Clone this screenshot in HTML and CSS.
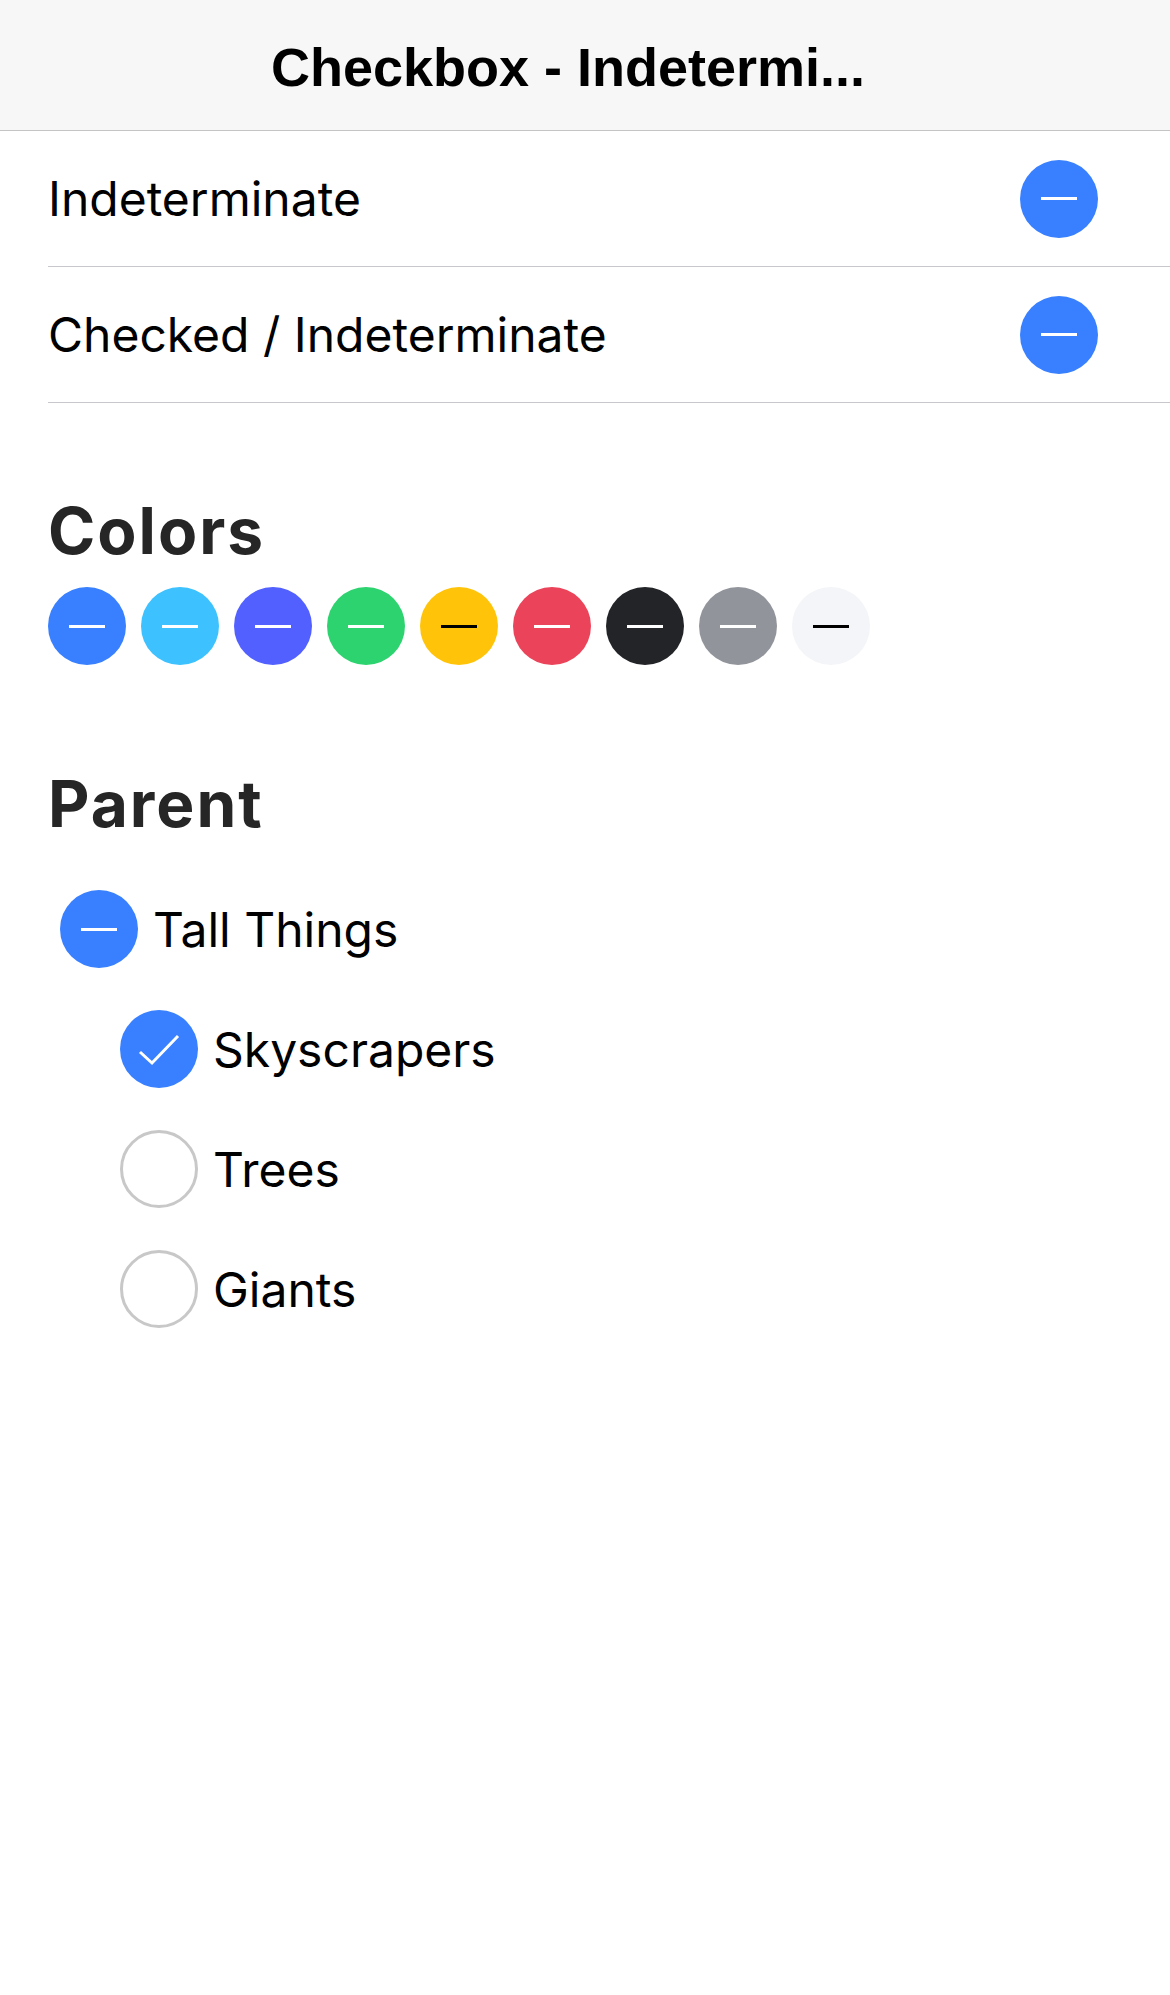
FILE: index.html
```html
<!DOCTYPE html>
<html lang="en">
<head>
<meta charset="utf-8">
<title>Checkbox - Indeterminate</title>
<link rel="stylesheet" href="styles.css">
</head>
<body>
<header class="toolbar">
  <div class="title">Checkbox - Indetermi...</div>
</header>
<main class="content">
  <div class="list">
    <div class="item">
      <div class="item-inner">
        <span class="label">Indeterminate</span>
        <span class="cb cb-primary"><span class="dash"></span></span>
      </div>
    </div>
    <div class="item">
      <div class="item-inner">
        <span class="label">Checked / Indeterminate</span>
        <span class="cb cb-primary"><span class="dash"></span></span>
      </div>
    </div>
  </div>

  <section class="section">
    <h2 class="heading heading-colors">Colors</h2>
    <div class="swatches">
      <span class="cb cb-primary"><span class="dash"></span></span>
      <span class="cb cb-secondary"><span class="dash"></span></span>
      <span class="cb cb-tertiary"><span class="dash"></span></span>
      <span class="cb cb-success"><span class="dash"></span></span>
      <span class="cb cb-warning"><span class="dash dash-dark"></span></span>
      <span class="cb cb-danger"><span class="dash"></span></span>
      <span class="cb cb-dark"><span class="dash"></span></span>
      <span class="cb cb-medium"><span class="dash"></span></span>
      <span class="cb cb-light"><span class="dash dash-dark"></span></span>
    </div>
  </section>

  <section class="section">
    <h2 class="heading heading-parent">Parent</h2>
    <div class="tree">
      <div class="tree-item tree-parent">
        <span class="cb cb-primary"><span class="dash"></span></span>
        <span class="label tree-label">Tall Things</span>
      </div>
      <div class="tree-item tree-child">
        <span class="cb cb-primary">
          <svg class="check" viewBox="0 0 78 78" width="78" height="78"><path d="M20 42 L32 53 L58 26" fill="none" stroke="#ffffff" stroke-width="3"/></svg>
        </span>
        <span class="label tree-label">Skyscrapers</span>
      </div>
      <div class="tree-item tree-child">
        <span class="cb cb-empty"></span>
        <span class="label tree-label">Trees</span>
      </div>
      <div class="tree-item tree-child">
        <span class="cb cb-empty"></span>
        <span class="label tree-label">Giants</span>
      </div>
    </div>
  </section>
</main>
</body>
</html>
```

FILE: styles.css
```css
* { box-sizing: border-box; }

html, body {
  margin: 0;
  padding: 0;
  background: #ffffff;
}

body {
  width: 1170px;
  min-height: 1995px;
  font-family: Inter, "Noto Sans", "Liberation Sans", sans-serif;
  color: #000000;
}

.toolbar {
  height: 131px;
  background: #f7f7f7;
  border-bottom: 1px solid #c4c4c4;
  display: flex;
  align-items: center;
  justify-content: center;
  padding: 3px 34px 0 0;
}

.title {
  font-family: "Liberation Sans", Arial, sans-serif;
  font-weight: 700;
  font-size: 54px;
  text-align: center;
  white-space: nowrap;
  color: #000000;
}

.list {
  display: flex;
  flex-direction: column;
}

.item {
  padding-left: 48px;
}

.item-inner {
  height: 136px;
  border-bottom: 1px solid #c8c7cc;
  display: flex;
  align-items: center;
  justify-content: space-between;
  padding-right: 72px;
}

.label {
  font-size: 48px;
  letter-spacing: 0;
  color: #000000;
}

.cb {
  flex: 0 0 auto;
  width: 78px;
  height: 78px;
  border-radius: 50%;
  display: flex;
  align-items: center;
  justify-content: center;
}

.dash {
  display: block;
  width: 36px;
  height: 3px;
  background: #ffffff;
}

.dash-dark { background: #000000; }

.check { display: block; }

.cb-primary { background: #3880ff; }
.cb-secondary { background: #3dc2ff; }
.cb-tertiary { background: #5260ff; }
.cb-success { background: #2dd36f; }
.cb-warning { background: #ffc409; }
.cb-danger { background: #eb445a; }
.cb-dark { background: #222428; }
.cb-medium { background: #92949c; }
.cb-light { background: #f4f5f8; }

.cb-empty {
  background: #ffffff;
  border: 3px solid #c8c8c8;
}

.section {
  padding-left: 48px;
}

.heading {
  font-size: 64px;
  font-weight: 700;
  line-height: 70px;
  letter-spacing: 2px;
  color: #262626;
  margin: 0;
}

.heading-colors {
  margin-top: 93px;
  margin-bottom: 21px;
}

.heading-parent {
  margin-top: 104px;
  margin-bottom: 30px;
}

.swatches {
  display: flex;
  gap: 15px;
}

.tree {
  display: flex;
  flex-direction: column;
}

.tree-item {
  height: 120px;
  display: flex;
  align-items: center;
  gap: 15px;
}

.tree-parent { padding-left: 12px; }
.tree-child { padding-left: 72px; }
```
